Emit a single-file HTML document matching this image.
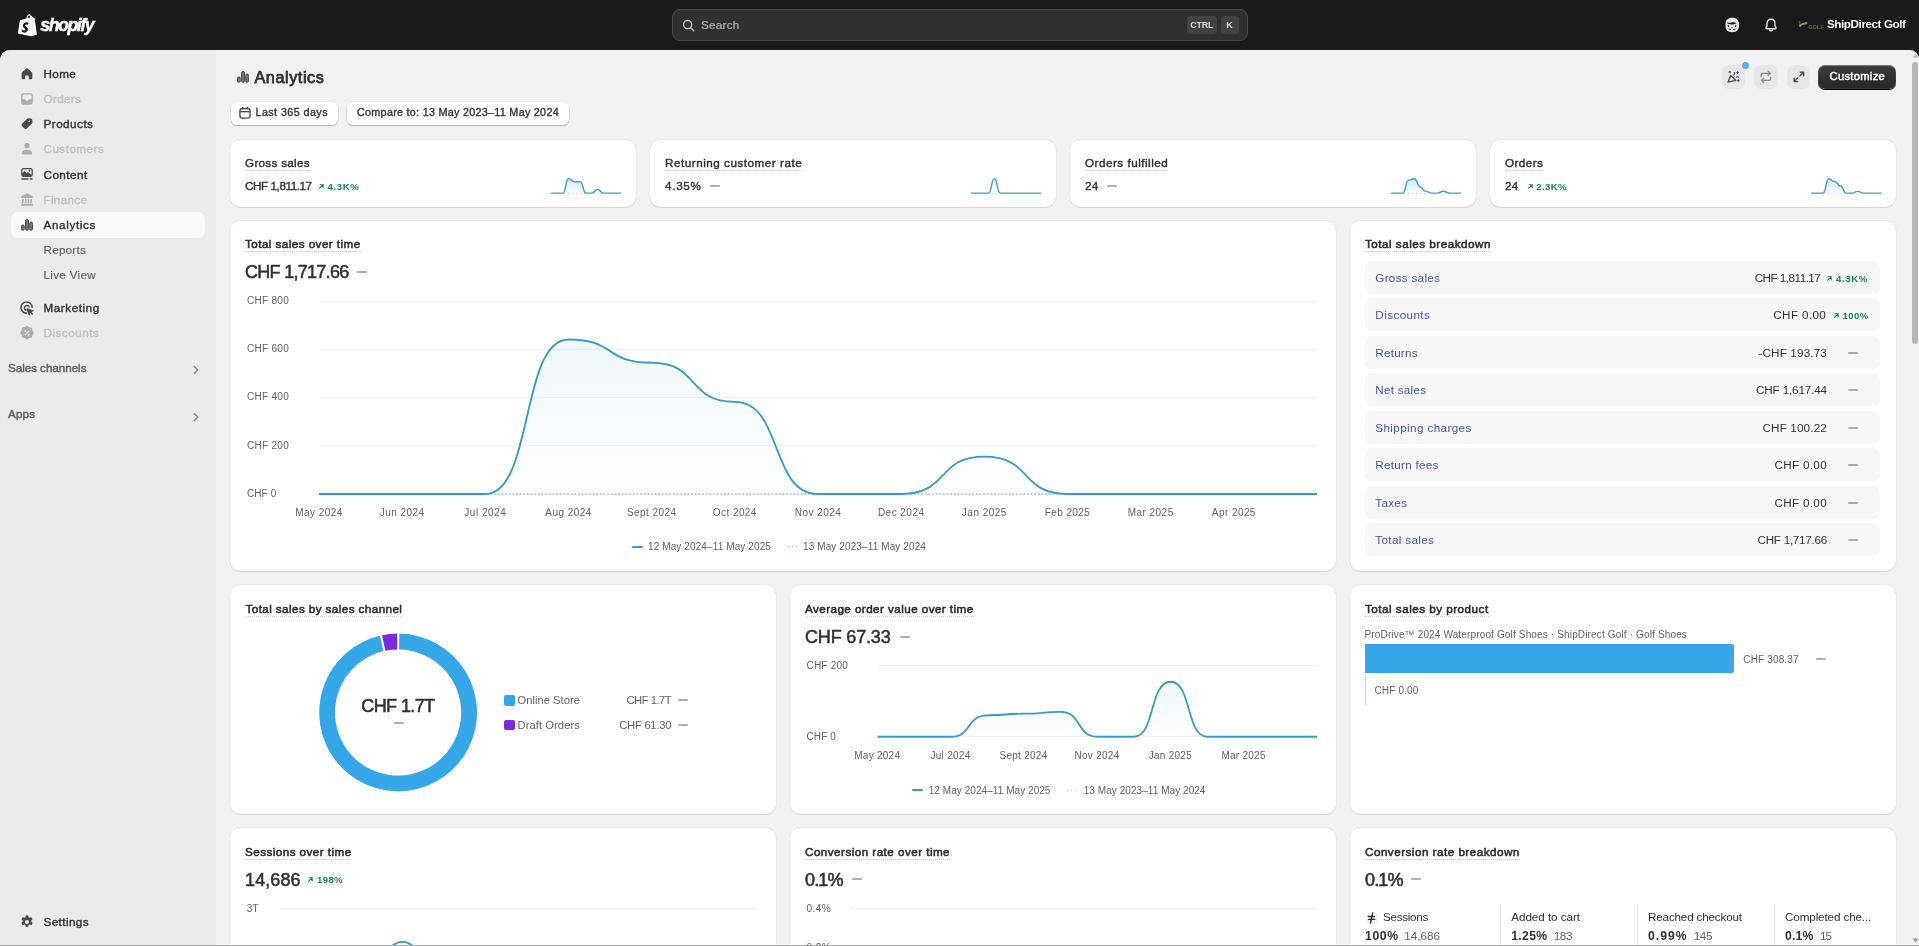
<!DOCTYPE html>
<html lang="en"><head><meta charset="utf-8"><title>Analytics</title>
<style>
html,body{margin:0;padding:0;overflow:hidden;}
body{width:1919px;height:946px;overflow:hidden;position:relative;background:#1a1a1a;font-family:"Liberation Sans",sans-serif;}
.t{position:absolute;white-space:pre;}
.b{position:absolute;display:block;overflow:visible;}
#root{position:absolute;left:0;top:0;width:1919px;height:946px;overflow:hidden;will-change:transform;}
</style></head><body><div id="root">
<div class="b" style="left:0px;top:0px;width:1919px;height:50px;background:#1a1a1a;"></div>
<svg class="b" style="left:16px;top:12px;" width="24" height="26" viewBox="0 0 24 26">
<path d="M3.9 8.2 L10.4 6.6 C10.6 4.4 11.6 2.6 13.2 2.3 C14.3 2.1 15 3 15.3 4 L16.2 4.3 L16.9 5.6 L18.6 5.9 L20.9 22.8 L14.8 24.3 L1.8 21.4 Z" fill="#fff"/>
<path d="M11.6 6.2 C11.7 4.9 12.4 3.6 13.3 3.4 C13.8 3.4 14.1 4 14.2 5.4 Z" fill="#1a1a1a"/>
<path d="M16.3 5.3 L16.9 24" stroke="#c9c9c9" stroke-width="0.5" fill="none"/>
<path d="M12.6 10.9 L12 13 C11.2 12.6 10.4 12.5 9.8 12.7 C9 13 9 13.8 9.7 14.3 C10.9 15.1 12.1 15.9 11.9 17.8 C11.7 19.8 10 20.9 8 20.6 C6.9 20.4 6 19.8 5.6 19.2 L6.3 17.4 C6.9 18 7.7 18.5 8.4 18.5 C9.2 18.5 9.5 17.7 9 17.1 C8.2 16.2 6.8 15.6 6.9 13.6 C7 11.5 8.7 10.2 10.7 10.3 C11.5 10.3 12.2 10.6 12.6 10.9 Z" fill="#1a1a1a"/>
</svg>
<div class="t" style="left:40.2px;top:13.2px;font-size:17.8px;line-height:24px;font-weight:700;font-style:italic;color:#fff;letter-spacing:-1.45px;-webkit-text-stroke:0.45px #fff;">shopify</div>
<div class="b" style="left:672px;top:9px;width:575.7px;height:32px;background:#303030;border:1px solid #4a4a4a;border-radius:8px;box-sizing:border-box;"></div>
<svg class="b" style="left:682px;top:19px;" width="13" height="13" viewBox="0 0 13 13"><circle cx="5.6" cy="5.6" r="4.1" fill="none" stroke="#c4c4c4" stroke-width="1.4"/><path d="M8.7 8.7 L11.8 11.8" stroke="#c4c4c4" stroke-width="1.4" stroke-linecap="round"/></svg>
<div class="t" style="left:701.00px;top:17.00px;font-size:11.7px;line-height:15px;color:#b5b5b5;letter-spacing:0.238px;-webkit-text-stroke:0.2px #b5b5b5;">Search</div>
<div class="b" style="left:1186.5px;top:16.3px;width:30.5px;height:17.3px;background:#424242;border-radius:4px;"></div>
<div class="t" style="left:1190.20px;top:19.00px;font-size:9px;line-height:12px;color:#d6d6d6;font-weight:700;letter-spacing:-0.249px;">CTRL</div>
<div class="b" style="left:1220.5px;top:16.3px;width:18px;height:17.3px;background:#424242;border-radius:4px;"></div>
<div class="t" style="left:1226.25px;top:19.00px;font-size:9px;line-height:12px;color:#d6d6d6;font-weight:700;">K</div>
<svg class="b" style="left:1724px;top:16px;" width="16" height="18" viewBox="0 0 16 18">
<path d="M8.200 1.700C12.600 1.700 14.900 4 14.900 8V10.500C14.900 14 12.400 16.200 8.200 16.200C4 16.200 1.500 14 1.500 10.500V8C1.500 4 3.800 1.700 8.200 1.700Z" fill="#ececec"/>
<path d="M3.300 5.900C3.700 6.800 5 7 6.600 6.700C8.700 6.300 10.700 6 12.800 7.300C11.200 7.500 10.100 8.600 8.300 8.600C6.300 8.600 5.400 7.500 3.400 7.700Z" fill="#1a1a1a"/>
<ellipse cx="4.500" cy="10.100" rx="0.800" ry="1" fill="#1a1a1a"/><ellipse cx="11.600" cy="10.100" rx="0.800" ry="1" fill="#1a1a1a"/>
<ellipse cx="8" cy="11.500" rx="0.850" ry="0.550" fill="#1a1a1a"/>
<path d="M4.300 12.800C5.300 12.500 6.300 12.700 7 13H9.100C9.800 12.700 10.900 12.500 11.900 12.800C11.300 13.700 10.200 14 9.100 14H7C5.900 14 4.900 13.700 4.300 12.800Z" fill="#1a1a1a"/>
<rect x="7" y="12.950" width="2.100" height="1.100" fill="#ececec"/>
</svg>
<svg class="b" style="left:1763.05px;top:17.3px;" width="16" height="16" viewBox="0 0 17 17">
<path d="M8.5 2.4 C5.9 2.4 4.3 4.3 4.3 6.7 L4.3 9 C4.3 9.8 3.9 10.4 3.3 11 C2.8 11.6 3.1 12.5 4 12.5 L13 12.5 C13.9 12.5 14.2 11.6 13.7 11 C13.1 10.4 12.7 9.8 12.7 9 L12.7 6.7 C12.7 4.3 11.1 2.4 8.5 2.4 Z" fill="none" stroke="#e3e3e3" stroke-width="1.45" stroke-linejoin="round"/>
<path d="M6.8 13.6 C7.1 14.4 7.7 14.8 8.5 14.8 C9.3 14.8 9.9 14.4 10.2 13.6" fill="none" stroke="#e3e3e3" stroke-width="1.3" stroke-linecap="round"/>
</svg>
<svg class="b" style="left:1798px;top:19px;" width="26" height="12" viewBox="0 0 26 12">
<path d="M1.500 2.300L2.100 7.600" stroke="#3f5f36" stroke-width="1.300" fill="none" stroke-linecap="round"/>
<path d="M2.200 6.700C3.600 4.300 6 5.400 8.500 3.900" stroke="#7aa366" stroke-width="1.900" fill="none" stroke-linecap="round"/>
<text x="10.300" y="9.800" font-family="Liberation Sans, sans-serif" font-size="5.700" font-weight="700" fill="#507545" letter-spacing="-0.150">GOLF</text>
</svg>
<div class="t" style="left:1827.00px;top:16.00px;font-size:11.7px;line-height:15px;color:#f7f7f7;font-weight:700;letter-spacing:-0.437px;">ShipDirect Golf</div>
<div class="b" style="left:0px;top:50px;width:1919px;height:896px;background:#f1f1f1;border-radius:10px 10px 0 0;"></div>
<div class="b" style="left:0px;top:50px;width:216px;height:896px;background:#ebebeb;border-radius:10px 0 0 0;"></div>
<div class="b" style="left:11px;top:212px;width:194px;height:25.5px;background:#fafafa;border-radius:7px;"></div>
<svg class="b" style="left:18px;top:64.7px;" width="18" height="18" viewBox="0 0 20 20"><path transform="matrix(.915 0 0 .944 .797 .79)" d="M9.3 3.3a1.1 1.1 0 0 1 1.4 0l4.9 4.1c.6.5.9 1.2.9 1.9v4.9a1.8 1.8 0 0 1-1.8 1.8h-1.9a.6.6 0 0 1-.6-.6v-2.6a1.2 1.2 0 0 0-1.2-1.2h-2a1.2 1.2 0 0 0-1.2 1.2v2.6a.6.6 0 0 1-.6.6H5.3a1.8 1.8 0 0 1-1.8-1.8V9.3c0-.7.3-1.4.9-1.9z" fill="#4a4a4a"/></svg>
<div class="t" style="left:43.50px;top:66.00px;font-size:11.7px;line-height:15px;color:#303030;letter-spacing:0.385px;-webkit-text-stroke:0.36px #303030;">Home</div>
<svg class="b" style="left:18px;top:89.8px;" width="18" height="18" viewBox="0 0 20 20"><path fill-rule="evenodd" d="M6 3.5h8A2.5 2.5 0 0 1 16.500 6v8A2.500 2.500 0 0 1 14 16.500H6A2.500 2.500 0 0 1 3.500 14V6A2.500 2.500 0 0 1 6 3.500zM5 6v4.200h2.300c.4 0 .7.250.8.600.2.800 1 1.300 1.900 1.300s1.700-.500 1.900-1.300c.1-.350.4-.600.8-.600H15V6a1 1 0 0 0-1-1H6a1 1 0 0 0-1 1z" fill="#adadad"/></svg>
<div class="t" style="left:43.50px;top:91.00px;font-size:11.7px;line-height:15px;color:#c1c1c1;letter-spacing:0.332px;-webkit-text-stroke:0.36px #c1c1c1;">Orders</div>
<svg class="b" style="left:18px;top:115px;" width="18" height="18" viewBox="0 0 20 20"><path transform="matrix(.907 0 0 .897 .32 1.19)" fill-rule="evenodd" d="M10.900 3.400a2 2 0 0 1 1.500-.600l2.900.100a2 2 0 0 1 1.900 1.900l.100 2.900a2 2 0 0 1-.600 1.500l-6.300 6.300a2 2 0 0 1-2.800 0l-3.100-3.100a2 2 0 0 1 0-2.800zM13.500 7.600a1.100 1.100 0 1 0 0-2.200 1.100 1.100 0 0 0 0 2.200z" fill="#4a4a4a"/></svg>
<div class="t" style="left:43.50px;top:116.00px;font-size:11.7px;line-height:15px;color:#303030;letter-spacing:0.478px;-webkit-text-stroke:0.36px #303030;">Products</div>
<svg class="b" style="left:18px;top:140px;" width="18" height="18" viewBox="0 0 20 20"><circle cx="10" cy="6.300" r="2.900" fill="#adadad"/><path d="M4.200 14.600c0-2.300 2.500-3.900 5.800-3.900s5.800 1.600 5.800 3.900c0 .9-.6 1.400-1.500 1.400H5.700c-.9 0-1.500-.5-1.500-1.400z" fill="#adadad"/></svg>
<div class="t" style="left:43.50px;top:141.00px;font-size:11.7px;line-height:15px;color:#c1c1c1;letter-spacing:0.465px;-webkit-text-stroke:0.36px #c1c1c1;">Customers</div>
<svg class="b" style="left:18px;top:165.4px;" width="18" height="18" viewBox="0 0 20 20"><path fill-rule="evenodd" d="M5.800 3.200h8.400a2.300 2.300 0 0 1 2.300 2.300v5.400a2.300 2.300 0 0 1-2.300 2.300H5.800a2.300 2.300 0 0 1-2.300-2.300V5.500a2.300 2.300 0 0 1 2.300-2.300zM5 9.300l2.300-2.600 2.200 2.300 1.500-1.300 4 3.300V5.800a1.100 1.100 0 0 0-1.100-1.100H6.100A1.100 1.100 0 0 0 5 5.800zM12.700 7.300a1 1 0 1 0 0-2 1 1 0 0 0 0 2z" fill="#4a4a4a"/><rect x="3.800" y="14.600" width="8" height="1.700" rx=".5" fill="#4a4a4a"/><rect x="12.800" y="14.600" width="3.400" height="1.700" rx=".5" fill="#4a4a4a"/></svg>
<div class="t" style="left:43.50px;top:167.00px;font-size:11.7px;line-height:15px;color:#303030;letter-spacing:0.467px;-webkit-text-stroke:0.36px #303030;">Content</div>
<svg class="b" style="left:18px;top:190.5px;" width="18" height="18" viewBox="0 0 20 20"><path d="M9.500 2.900a1.100 1.100 0 0 1 1 0l5.300 2.600c.4.200.7.600.7 1v.400c0 .500-.4.900-.9.900H4.400a.9.900 0 0 1-.9-.9v-.4c0-.400.3-.800.700-1z" fill="#adadad"/><rect x="4.600" y="8.700" width="1.700" height="4.800" fill="#adadad"/><rect x="7.700" y="8.700" width="1.700" height="4.800" fill="#adadad"/><rect x="10.700" y="8.700" width="1.700" height="4.800" fill="#adadad"/><rect x="13.700" y="8.700" width="1.700" height="4.800" fill="#adadad"/><rect x="3.500" y="14.300" width="13" height="2.200" rx=".6" fill="#adadad"/></svg>
<div class="t" style="left:43.50px;top:192.00px;font-size:11.7px;line-height:15px;color:#c1c1c1;letter-spacing:0.304px;-webkit-text-stroke:0.36px #c1c1c1;">Finance</div>
<svg class="b" style="left:18px;top:216px;" width="18" height="18" viewBox="0 0 20 20"><g fill="#757575" stroke="#4a4a4a" stroke-width="1.100"><rect x="3.850" y="9.950" width="3.100" height="5.900" rx="1.550"/><rect x="8.350" y="3.850" width="3.300" height="12" rx="1.650"/><rect x="13.050" y="6.650" width="3.100" height="9.200" rx="1.550"/></g></svg>
<div class="t" style="left:43.50px;top:217.00px;font-size:11.7px;line-height:15px;color:#303030;letter-spacing:0.631px;-webkit-text-stroke:0.36px #303030;">Analytics</div>
<svg class="b" style="left:18px;top:299px;" width="18" height="18" viewBox="0 0 20 20"><path d="M15.700 9.300A6.200 6.200 0 1 0 9.300 15.700" fill="none" stroke="#4a4a4a" stroke-width="1.700" stroke-linecap="round"/><path d="M12.500 8.800A2.800 2.800 0 1 0 8.800 12.500" fill="none" stroke="#4a4a4a" stroke-width="1.600" stroke-linecap="round"/><path d="M10.600 10.300l6.700 2.500c.4.150.4.700 0 .850l-2.500.9 2.100 2.100-1.100 1.100-2.100-2.100-.9 2.500c-.150.4-.7.4-.850 0l-2.500-6.700c-.2-.700.450-1.350 1.150-1.150z" fill="#4a4a4a"/></svg>
<div class="t" style="left:43.50px;top:300.00px;font-size:11.7px;line-height:15px;color:#303030;letter-spacing:0.542px;-webkit-text-stroke:0.36px #303030;">Marketing</div>
<svg class="b" style="left:18px;top:324px;" width="18" height="18" viewBox="0 0 20 20"><path fill-rule="evenodd" d="M8.600 2.700a2 2 0 0 1 2.800 0l.7.700c.2.200.5.300.8.300h1a2 2 0 0 1 2 2v1c0 .3.100.600.300.8l.7.700a2 2 0 0 1 0 2.800l-.7.700c-.2.200-.3.500-.3.800v1a2 2 0 0 1-2 2h-1c-.3 0-.600.100-.8.300l-.7.700a2 2 0 0 1-2.800 0l-.7-.7a1.100 1.100 0 0 0-.8-.3h-1a2 2 0 0 1-2-2v-1c0-.3-.100-.600-.300-.8l-.7-.7a2 2 0 0 1 0-2.800l.7-.7c.2-.2.3-.5.3-.8v-1a2 2 0 0 1 2-2h1c.3 0 .600-.100.800-.300zM7.400 11.700l4.300-4.300a.65.65 0 0 1 .9.900l-4.300 4.300a.65.65 0 0 1-.9-.9zM8.100 8.900a.95.95 0 1 0 0-1.900.95.95 0 0 0 0 1.900zM11.900 13a.95.95 0 1 0 0-1.900.95.95 0 0 0 0 1.900z" fill="#adadad"/></svg>
<div class="t" style="left:43.50px;top:325.00px;font-size:11.7px;line-height:15px;color:#c1c1c1;letter-spacing:0.487px;-webkit-text-stroke:0.36px #c1c1c1;">Discounts</div>
<svg class="b" style="left:18px;top:912.8px;" width="18" height="18" viewBox="0 0 20 20"><path fill-rule="evenodd" d="M8.400 3.500c.1-.6.600-1 1.200-1h.8c.6 0 1.100.4 1.200 1l.2 1.100c.4.150.750.350 1.100.6l1.050-.4c.55-.2 1.200 0 1.500.55l.4.700c.3.500.2 1.150-.250 1.550l-.85.750a4.600 4.600 0 0 1 0 1.300l.85.750c.450.4.550 1.050.250 1.550l-.4.700c-.3.550-.950.750-1.500.55l-1.050-.4c-.350.250-.7.450-1.100.6l-.2 1.100c-.1.600-.6 1-1.200 1h-.8c-.6 0-1.100-.4-1.200-1l-.2-1.100a4.600 4.600 0 0 1-1.100-.6l-1.050.4c-.55.200-1.200 0-1.500-.55l-.4-.7a1.250 1.250 0 0 1 .250-1.550l.85-.750a4.600 4.600 0 0 1 0-1.300l-.85-.750A1.250 1.250 0 0 1 4.150 6.050l.4-.7c.3-.55.950-.750 1.500-.55l1.050.4c.350-.250.7-.450 1.100-.6zM10 12.300a2.300 2.300 0 1 0 0-4.600 2.300 2.300 0 0 0 0 4.600z" fill="#4a4a4a"/></svg>
<div class="t" style="left:43.50px;top:914.00px;font-size:11.7px;line-height:15px;color:#303030;letter-spacing:0.403px;-webkit-text-stroke:0.36px #303030;">Settings</div>
<div class="t" style="left:43.50px;top:242.00px;font-size:11.7px;line-height:15px;color:#616161;letter-spacing:0.219px;-webkit-text-stroke:0.15px #616161;">Reports</div>
<div class="t" style="left:43.50px;top:267.00px;font-size:11.7px;line-height:15px;color:#616161;letter-spacing:0.293px;-webkit-text-stroke:0.15px #616161;">Live View</div>
<div class="t" style="left:8.00px;top:360.00px;font-size:11.7px;line-height:15px;color:#616161;letter-spacing:-0.061px;-webkit-text-stroke:0.44px #616161;">Sales channels</div>
<div class="t" style="left:8.00px;top:406.00px;font-size:11.7px;line-height:15px;color:#616161;letter-spacing:0.145px;-webkit-text-stroke:0.44px #616161;">Apps</div>
<svg class="b" style="left:190px;top:364.3px;" width="12" height="12" viewBox="0 0 12 12"><path d="M4.300 2.500L7.900 6 4.300 9.500" fill="none" stroke="#8a8a8a" stroke-width="1.400" stroke-linecap="round" stroke-linejoin="round"/></svg>
<svg class="b" style="left:190px;top:410.8px;" width="12" height="12" viewBox="0 0 12 12"><path d="M4.300 2.500L7.900 6 4.300 9.500" fill="none" stroke="#8a8a8a" stroke-width="1.400" stroke-linecap="round" stroke-linejoin="round"/></svg>
<svg class="b" style="left:233.8px;top:67.7px;" width="18" height="18" viewBox="0 0 20 20"><g fill="#757575" stroke="#4a4a4a" stroke-width="1.100"><rect x="3.850" y="9.950" width="3.100" height="5.900" rx="1.550"/><rect x="8.350" y="3.850" width="3.300" height="12" rx="1.650"/><rect x="13.050" y="6.650" width="3.100" height="9.200" rx="1.550"/></g></svg>
<div class="t" style="left:254.50px;top:67.00px;font-size:16.2px;line-height:20px;color:#303030;letter-spacing:0.575px;-webkit-text-stroke:0.75px #303030;">Analytics</div>
<div class="b" style="left:1721.7px;top:65px;width:23.5px;height:23.7px;background:#e7e7e7;border-radius:7px;"></div>
<div class="b" style="left:1754.3px;top:65px;width:23.5px;height:23.7px;background:#e7e7e7;border-radius:7px;"></div>
<div class="b" style="left:1786.8px;top:65px;width:23.5px;height:23.7px;background:#e7e7e7;border-radius:7px;"></div>
<div class="b" style="left:1741.8px;top:62px;width:7.2px;height:7.2px;background:#52b1f0;border-radius:50%;"></div>
<svg class="b" style="left:1725.4px;top:69.1px;" width="15.8" height="15.8" viewBox="0 0 17 17"><path d="M3.300 14.200L6 6.900L11.600 12.200Z" fill="none" stroke="#4a4a4a" stroke-width="1.450" stroke-linejoin="round"/>
<path d="M9.600 6.300c.8-.6 1-1.700.5-2.600M12.200 8.700c.8-.5 1.900-.4 2.500.2" fill="none" stroke="#4a4a4a" stroke-width="1.200" stroke-linecap="round"/>
<path d="M5.200 2.300v1.800M4.300 3.200h1.800M13.600 2.800v2M12.600 3.800h2M14.300 11.600v1.800M13.400 12.500h1.800" stroke="#4a4a4a" stroke-width="1.100" stroke-linecap="round"/></svg>
<svg class="b" style="left:1758.1px;top:69px;" width="15.8" height="15.8" viewBox="0 0 17 17"><path d="M3.300 8V6.800a2 2 0 0 1 2-2h7.400M10.900 2.500l2.300 2.300-2.300 2.300" fill="none" stroke="#8a8a8a" stroke-width="1.400" stroke-linecap="round" stroke-linejoin="round"/>
<path d="M13.700 9v1.200a2 2 0 0 1-2 2H4.300M6.100 14.500l-2.300-2.300 2.300-2.300" fill="none" stroke="#8a8a8a" stroke-width="1.400" stroke-linecap="round" stroke-linejoin="round"/></svg>
<svg class="b" style="left:1790.6px;top:69px;" width="15.8" height="15.8" viewBox="0 0 17 17"><path d="M9.800 3.400h3.800v3.800M13.300 3.700L9.500 7.500M7.200 13.600H3.400V9.800M3.700 13.300l3.800-3.800" fill="none" stroke="#4a4a4a" stroke-width="1.450" stroke-linecap="round" stroke-linejoin="round"/></svg>
<div class="b" style="left:1818.3px;top:64.5px;width:77.5px;height:24.8px;background:linear-gradient(#3d3d3d,#262626);border-radius:7px;box-shadow:inset 0 1px 0 rgba(255,255,255,.25),0 1px 0 #000, inset 0 0 0 1px rgba(255,255,255,.08);"></div>
<div class="t" style="left:1829.60px;top:69.00px;font-size:11.2px;line-height:14px;color:#fff;letter-spacing:0.288px;-webkit-text-stroke:0.43px #fff;">Customize</div>
<div class="b" style="left:230.5px;top:102px;width:107.5px;height:22.8px;background:#fff;border-radius:6px;box-shadow:0 0 0 0.5px rgba(0,0,0,.07),0 1px 0 0.3px rgba(0,0,0,.17);"></div>
<svg class="b" style="left:238px;top:105.8px;" width="14" height="14" viewBox="0 0 14 14"><rect x="1.900" y="2.500" width="10.200" height="9.600" rx="2.300" fill="none" stroke="#4a4a4a" stroke-width="1.350"/><path d="M2.200 5.700h9.600" stroke="#4a4a4a" stroke-width="1.350"/><path d="M4.700 1.300v1.600M9.300 1.300v1.600" stroke="#4a4a4a" stroke-width="1.350" stroke-linecap="round"/></svg>
<div class="t" style="left:255.50px;top:105.00px;font-size:10.8px;line-height:14px;color:#303030;letter-spacing:0.404px;-webkit-text-stroke:0.33px #303030;">Last 365 days</div>
<div class="b" style="left:346.8px;top:102px;width:222.7px;height:22.8px;background:#fff;border-radius:6px;box-shadow:0 0 0 0.5px rgba(0,0,0,.07),0 1px 0 0.3px rgba(0,0,0,.17);"></div>
<div class="t" style="left:357.00px;top:105.00px;font-size:10.8px;line-height:14px;color:#303030;letter-spacing:0.271px;-webkit-text-stroke:0.33px #303030;">Compare to: 13 May 2023–11 May 2024</div>
<div class="b" style="left:230px;top:140px;width:406px;height:67px;background:#fff;border-radius:10.5px;box-shadow:0 0 0 0.5px rgba(0,0,0,.065),0 1px 0 0 rgba(0,0,0,.085);"></div>
<div class="b" style="left:650px;top:140px;width:406px;height:67px;background:#fff;border-radius:10.5px;box-shadow:0 0 0 0.5px rgba(0,0,0,.065),0 1px 0 0 rgba(0,0,0,.085);"></div>
<div class="b" style="left:1070px;top:140px;width:406px;height:67px;background:#fff;border-radius:10.5px;box-shadow:0 0 0 0.5px rgba(0,0,0,.065),0 1px 0 0 rgba(0,0,0,.085);"></div>
<div class="b" style="left:1490px;top:140px;width:406px;height:67px;background:#fff;border-radius:10.5px;box-shadow:0 0 0 0.5px rgba(0,0,0,.065),0 1px 0 0 rgba(0,0,0,.085);"></div>
<div class="t" style="left:245.00px;top:155.00px;font-size:11.7px;line-height:15px;color:#2a2a2a;letter-spacing:0.294px;-webkit-text-stroke:0.36px #2a2a2a;">Gross sales</div>
<div class="b" style="left:245px;top:169.9px;width:65px;height:0px;border-top:1px dotted #cccccc;"></div>
<div class="t" style="left:245.00px;top:178.00px;font-size:11.7px;line-height:15px;color:#303030;letter-spacing:-0.435px;-webkit-text-stroke:0.36px #303030;">CHF 1,811.17</div>
<svg class="b" style="left:318.7px;top:184.0px;" width="4.9" height="4.9" viewBox="0 0 6 6"><path d="M0.900 5.100L4.900 1.100M1.600 0.900H5.100V4.400" fill="none" stroke="#12855a" stroke-width="1.450" stroke-linecap="square" stroke-linejoin="miter"/></svg>
<div class="t" style="left:327.50px;top:180.00px;font-size:9.6px;line-height:13px;color:#12855a;font-weight:700;letter-spacing:0.637px;">4.3K%</div>
<svg class="b" style="left:0;top:0" width="1919" height="946"><path d="M551.20 193.10C554.39 193.10 553.81 193.10 557.00 193.10C560.19 193.10 559.61 193.10 562.80 193.10C565.99 193.10 565.41 178.70 568.60 178.70C571.79 178.70 571.21 181.72 574.40 181.72C577.59 181.72 577.01 181.87 580.20 181.87C583.39 181.87 582.81 193.10 586.00 193.10C589.19 193.10 588.61 193.10 591.80 193.10C594.99 193.10 594.41 189.36 597.60 189.36C600.79 189.36 600.21 193.10 603.40 193.10C606.59 193.10 606.01 193.10 609.20 193.10C612.39 193.10 611.81 193.10 615.00 193.10C618.19 193.10 617.61 193.10 620.80 193.10L620.80 193.1L551.20 193.1Z" fill="url(#sg)" /><path d="M564.2 193.4H585.2" stroke="#9cc9e4" stroke-width="1" stroke-dasharray="1 3"/><path d="M551.20 193.10C554.39 193.10 553.81 193.10 557.00 193.10C560.19 193.10 559.61 193.10 562.80 193.10C565.99 193.10 565.41 178.70 568.60 178.70C571.79 178.70 571.21 181.72 574.40 181.72C577.59 181.72 577.01 181.87 580.20 181.87C583.39 181.87 582.81 193.10 586.00 193.10C589.19 193.10 588.61 193.10 591.80 193.10C594.99 193.10 594.41 189.36 597.60 189.36C600.79 189.36 600.21 193.10 603.40 193.10C606.59 193.10 606.01 193.10 609.20 193.10C612.39 193.10 611.81 193.10 615.00 193.10C618.19 193.10 617.61 193.10 620.80 193.10" fill="none" stroke="#469ccb" stroke-width="1.450" stroke-linecap="round"/></svg>
<div class="t" style="left:665.00px;top:155.00px;font-size:11.7px;line-height:15px;color:#2a2a2a;letter-spacing:0.513px;-webkit-text-stroke:0.36px #2a2a2a;">Returning customer rate</div>
<div class="b" style="left:665px;top:169.9px;width:137.3px;height:0px;border-top:1px dotted #cccccc;"></div>
<div class="t" style="left:665.00px;top:178.00px;font-size:11.7px;line-height:15px;color:#303030;letter-spacing:0.705px;-webkit-text-stroke:0.36px #303030;">4.35%</div>
<div class="b" style="left:709.5px;top:185px;width:10.7px;height:2px;background:#adadad;border-radius:1px;"></div>
<svg class="b" style="left:0;top:0" width="1919" height="946"><path d="M984.2 193.4H1005.2" stroke="#9cc9e4" stroke-width="1" stroke-dasharray="1 3"/><path d="M971.20 193.10C974.39 193.10 973.81 193.10 977.00 193.10C980.19 193.10 979.61 193.10 982.80 193.10C985.99 193.10 985.41 193.10 988.60 193.10C991.79 193.10 991.21 178.70 994.40 178.70C997.59 178.70 997.01 193.10 1000.20 193.10C1003.39 193.10 1002.81 193.10 1006.00 193.10C1009.19 193.10 1008.61 193.10 1011.80 193.10C1014.99 193.10 1014.41 193.10 1017.60 193.10C1020.79 193.10 1020.21 193.10 1023.40 193.10C1026.59 193.10 1026.01 193.10 1029.20 193.10C1032.39 193.10 1031.81 193.10 1035.00 193.10C1038.19 193.10 1037.61 193.10 1040.80 193.10" fill="none" stroke="#469ccb" stroke-width="1.450" stroke-linecap="round"/></svg>
<div class="t" style="left:1085.00px;top:155.00px;font-size:11.7px;line-height:15px;color:#2a2a2a;letter-spacing:0.492px;-webkit-text-stroke:0.36px #2a2a2a;">Orders fulfilled</div>
<div class="b" style="left:1085px;top:169.9px;width:83.3px;height:0px;border-top:1px dotted #cccccc;"></div>
<div class="t" style="left:1085.00px;top:178.00px;font-size:11.7px;line-height:15px;color:#303030;letter-spacing:0.343px;-webkit-text-stroke:0.36px #303030;">24</div>
<div class="b" style="left:1106.5px;top:185px;width:10.7px;height:2px;background:#adadad;border-radius:1px;"></div>
<svg class="b" style="left:0;top:0" width="1919" height="946"><path d="M1391.20 193.10C1394.39 193.10 1393.81 193.10 1397.00 193.10C1400.19 193.10 1399.61 193.10 1402.80 193.10C1405.99 193.10 1405.41 180.14 1408.60 180.14C1411.79 180.14 1411.21 178.70 1414.40 178.70C1417.59 178.70 1417.01 186.91 1420.20 186.91C1423.39 186.91 1422.81 191.37 1426.00 191.37C1429.19 191.37 1428.61 193.10 1431.80 193.10C1434.99 193.10 1434.41 193.10 1437.60 193.10C1440.79 193.10 1440.21 191.23 1443.40 191.23C1446.59 191.23 1446.01 193.10 1449.20 193.10C1452.39 193.10 1451.81 193.10 1455.00 193.10C1458.19 193.10 1457.61 193.10 1460.80 193.10L1460.80 193.1L1391.20 193.1Z" fill="url(#sg)" /><path d="M1404.2 193.4H1425.2" stroke="#9cc9e4" stroke-width="1" stroke-dasharray="1 3"/><path d="M1391.20 193.10C1394.39 193.10 1393.81 193.10 1397.00 193.10C1400.19 193.10 1399.61 193.10 1402.80 193.10C1405.99 193.10 1405.41 180.14 1408.60 180.14C1411.79 180.14 1411.21 178.70 1414.40 178.70C1417.59 178.70 1417.01 186.91 1420.20 186.91C1423.39 186.91 1422.81 191.37 1426.00 191.37C1429.19 191.37 1428.61 193.10 1431.80 193.10C1434.99 193.10 1434.41 193.10 1437.60 193.10C1440.79 193.10 1440.21 191.23 1443.40 191.23C1446.59 191.23 1446.01 193.10 1449.20 193.10C1452.39 193.10 1451.81 193.10 1455.00 193.10C1458.19 193.10 1457.61 193.10 1460.80 193.10" fill="none" stroke="#469ccb" stroke-width="1.450" stroke-linecap="round"/></svg>
<div class="t" style="left:1505.00px;top:155.00px;font-size:11.7px;line-height:15px;color:#2a2a2a;letter-spacing:0.424px;-webkit-text-stroke:0.36px #2a2a2a;">Orders</div>
<div class="b" style="left:1505px;top:169.9px;width:38.3px;height:0px;border-top:1px dotted #cccccc;"></div>
<div class="t" style="left:1505.00px;top:178.00px;font-size:11.7px;line-height:15px;color:#303030;letter-spacing:0.343px;-webkit-text-stroke:0.36px #303030;">24</div>
<svg class="b" style="left:1527.5px;top:184.0px;" width="4.9" height="4.9" viewBox="0 0 6 6"><path d="M0.900 5.100L4.900 1.100M1.600 0.900H5.100V4.400" fill="none" stroke="#12855a" stroke-width="1.450" stroke-linecap="square" stroke-linejoin="miter"/></svg>
<div class="t" style="left:1536.30px;top:180.00px;font-size:9.6px;line-height:13px;color:#12855a;font-weight:700;letter-spacing:0.387px;">2.3K%</div>
<svg class="b" style="left:0;top:0" width="1919" height="946"><path d="M1811.40 193.10C1814.59 193.10 1814.01 193.10 1817.20 193.10C1820.39 193.10 1819.81 193.10 1823.00 193.10C1826.19 193.10 1825.61 178.70 1828.80 178.70C1831.99 178.70 1831.41 181.58 1834.60 181.58C1837.79 181.58 1837.21 185.90 1840.40 185.90C1843.59 185.90 1843.01 193.10 1846.20 193.10C1849.39 193.10 1848.81 193.10 1852.00 193.10C1855.19 193.10 1854.61 191.37 1857.80 191.37C1860.99 191.37 1860.41 193.10 1863.60 193.10C1866.79 193.10 1866.21 193.10 1869.40 193.10C1872.59 193.10 1872.01 193.10 1875.20 193.10C1878.39 193.10 1877.81 193.10 1881.00 193.10L1881.00 193.1L1811.40 193.1Z" fill="url(#sg)" /><path d="M1824.4 193.4H1845.4" stroke="#9cc9e4" stroke-width="1" stroke-dasharray="1 3"/><path d="M1811.40 193.10C1814.59 193.10 1814.01 193.10 1817.20 193.10C1820.39 193.10 1819.81 193.10 1823.00 193.10C1826.19 193.10 1825.61 178.70 1828.80 178.70C1831.99 178.70 1831.41 181.58 1834.60 181.58C1837.79 181.58 1837.21 185.90 1840.40 185.90C1843.59 185.90 1843.01 193.10 1846.20 193.10C1849.39 193.10 1848.81 193.10 1852.00 193.10C1855.19 193.10 1854.61 191.37 1857.80 191.37C1860.99 191.37 1860.41 193.10 1863.60 193.10C1866.79 193.10 1866.21 193.10 1869.40 193.10C1872.59 193.10 1872.01 193.10 1875.20 193.10C1878.39 193.10 1877.81 193.10 1881.00 193.10" fill="none" stroke="#469ccb" stroke-width="1.450" stroke-linecap="round"/></svg>
<div class="b" style="left:230px;top:221px;width:1106px;height:350px;background:#fff;border-radius:10.5px;box-shadow:0 0 0 0.5px rgba(0,0,0,.065),0 1px 0 0 rgba(0,0,0,.085);"></div>
<div class="t" style="left:245.00px;top:236.00px;font-size:11.7px;line-height:15px;color:#2a2a2a;letter-spacing:0.434px;-webkit-text-stroke:0.52px #2a2a2a;">Total sales over time</div>
<div class="b" style="left:245px;top:250.9px;width:115.75px;height:0px;border-top:1px dotted #cccccc;"></div>
<div class="t" style="left:245.00px;top:261.00px;font-size:18px;line-height:22px;color:#303030;letter-spacing:-0.714px;-webkit-text-stroke:0.52px #303030;">CHF 1,717.66</div>
<div class="b" style="left:355.5px;top:271px;width:11px;height:2px;background:#adadad;border-radius:1px;"></div>
<div class="b" style="left:320px;top:493.5px;width:996px;height:1px;background:#f1f1f1;"></div>
<div class="t" style="left:247.00px;top:487.00px;font-size:10px;line-height:13px;color:#616161;letter-spacing:0.082px;">CHF 0</div>
<div class="b" style="left:320px;top:445.25px;width:996px;height:1px;background:#f1f1f1;"></div>
<div class="t" style="left:247.00px;top:439.00px;font-size:10px;line-height:13px;color:#616161;letter-spacing:0.283px;">CHF 200</div>
<div class="b" style="left:320px;top:397.0px;width:996px;height:1px;background:#f1f1f1;"></div>
<div class="t" style="left:247.00px;top:390.00px;font-size:10px;line-height:13px;color:#616161;letter-spacing:0.283px;">CHF 400</div>
<div class="b" style="left:320px;top:348.75px;width:996px;height:1px;background:#f1f1f1;"></div>
<div class="t" style="left:247.00px;top:342.00px;font-size:10px;line-height:13px;color:#616161;letter-spacing:0.283px;">CHF 600</div>
<div class="b" style="left:320px;top:300.5px;width:996px;height:1px;background:#f1f1f1;"></div>
<div class="t" style="left:247.00px;top:294.00px;font-size:10px;line-height:13px;color:#616161;letter-spacing:0.283px;">CHF 800</div>
<svg class="b" style="left:0;top:0" width="1919" height="946">
<defs><linearGradient id="ag" x1="0" y1="0" x2="0" y2="1"><stop offset="0" stop-color="#3a9fd4" stop-opacity=".085"/><stop offset="1" stop-color="#3a9fd4" stop-opacity="0"/></linearGradient>
<linearGradient id="sg" x1="0" y1="0" x2="0" y2="1"><stop offset="0" stop-color="#5ab4e8" stop-opacity=".30"/><stop offset="1" stop-color="#5ab4e8" stop-opacity=".02"/></linearGradient></defs>
<path d="M319.00 494.00C367.24 494.00 353.93 494.00 402.17 494.00C450.41 494.00 437.10 494.00 485.34 494.00C533.58 494.00 520.27 339.50 568.51 339.50C616.75 339.50 603.44 362.76 651.68 362.76C699.92 362.76 686.61 401.84 734.85 401.84C783.09 401.84 769.78 494.00 818.02 494.00C866.26 494.00 852.95 494.00 901.19 494.00C949.43 494.00 936.12 456.61 984.36 456.61C1032.60 456.61 1019.29 494.00 1067.53 494.00C1115.77 494.00 1102.46 494.00 1150.70 494.00C1198.94 494.00 1185.63 494.00 1233.87 494.00C1282.11 494.00 1268.80 494.00 1317.04 494.00L1317.04 494L319.00 494Z" fill="url(#ag)"/>
<path d="M319 494H1316" stroke="#8cc2e0" stroke-width="1.500" stroke-dasharray="1.500 2.150" fill="none"/>
<path d="M319.00 494.00C367.24 494.00 353.93 494.00 402.17 494.00C450.41 494.00 437.10 494.00 485.34 494.00C533.58 494.00 520.27 339.50 568.51 339.50C616.75 339.50 603.44 362.76 651.68 362.76C699.92 362.76 686.61 401.84 734.85 401.84C783.09 401.84 769.78 494.00 818.02 494.00C866.26 494.00 852.95 494.00 901.19 494.00C949.43 494.00 936.12 456.61 984.36 456.61C1032.60 456.61 1019.29 494.00 1067.53 494.00C1115.77 494.00 1102.46 494.00 1150.70 494.00C1198.94 494.00 1185.63 494.00 1233.87 494.00C1282.11 494.00 1268.80 494.00 1317.04 494.00" fill="none" stroke="#3c98ca" stroke-width="1.850" stroke-linecap="butt" stroke-linejoin="round"/>
</svg>
<div class="t" style="left:295.25px;top:506.00px;font-size:10px;line-height:13px;color:#616161;letter-spacing:0.448px;">May 2024</div>
<div class="t" style="left:379.67px;top:506.00px;font-size:10px;line-height:13px;color:#616161;letter-spacing:0.481px;">Jun 2024</div>
<div class="t" style="left:464.34px;top:506.00px;font-size:10px;line-height:13px;color:#616161;letter-spacing:0.524px;">Jul 2024</div>
<div class="t" style="left:545.26px;top:506.00px;font-size:10px;line-height:13px;color:#616161;letter-spacing:0.460px;">Aug 2024</div>
<div class="t" style="left:626.93px;top:506.00px;font-size:10px;line-height:13px;color:#616161;letter-spacing:0.434px;">Sept 2024</div>
<div class="t" style="left:712.85px;top:506.00px;font-size:10px;line-height:13px;color:#616161;letter-spacing:0.427px;">Oct 2024</div>
<div class="t" style="left:794.77px;top:506.00px;font-size:10px;line-height:13px;color:#616161;letter-spacing:0.461px;">Nov 2024</div>
<div class="t" style="left:877.94px;top:506.00px;font-size:10px;line-height:13px;color:#616161;letter-spacing:0.461px;">Dec 2024</div>
<div class="t" style="left:961.86px;top:506.00px;font-size:10px;line-height:13px;color:#616161;letter-spacing:0.481px;">Jan 2025</div>
<div class="t" style="left:1044.78px;top:506.00px;font-size:10px;line-height:13px;color:#616161;letter-spacing:0.405px;">Feb 2025</div>
<div class="t" style="left:1127.70px;top:506.00px;font-size:10px;line-height:13px;color:#616161;letter-spacing:0.469px;">Mar 2025</div>
<div class="t" style="left:1211.87px;top:506.00px;font-size:10px;line-height:13px;color:#616161;letter-spacing:0.427px;">Apr 2025</div>
<div class="b" style="left:632px;top:545.5px;width:11px;height:2px;background:#3c98ca;border-radius:1px;"></div>
<div class="t" style="left:648.00px;top:540.00px;font-size:10px;line-height:13px;color:#616161;letter-spacing:0.111px;">12 May 2024–11 May 2025</div>
<svg class="b" style="left:787px;top:544px;" width="12" height="5" viewBox="0 0 12 5"><circle cx="1.500" cy="2.500" r="1" fill="#a9d3ea"/><circle cx="5.500" cy="2.500" r="1" fill="#a9d3ea"/><circle cx="9.500" cy="2.500" r="1" fill="#a9d3ea"/></svg>
<div class="t" style="left:803.00px;top:540.00px;font-size:10px;line-height:13px;color:#616161;letter-spacing:0.111px;">13 May 2023–11 May 2024</div>
<div class="b" style="left:1350px;top:221px;width:546px;height:350px;background:#fff;border-radius:10.5px;box-shadow:0 0 0 0.5px rgba(0,0,0,.065),0 1px 0 0 rgba(0,0,0,.085);"></div>
<div class="t" style="left:1365.00px;top:236.00px;font-size:11.7px;line-height:15px;color:#2a2a2a;letter-spacing:0.487px;-webkit-text-stroke:0.52px #2a2a2a;">Total sales breakdown</div>
<div class="b" style="left:1365px;top:250.9px;width:126px;height:0px;border-top:1px dotted #cccccc;"></div>
<div class="b" style="left:1365px;top:261.0px;width:515px;height:33px;background:#f7f7f7;border-radius:7px;"></div>
<div class="t" style="left:1375.30px;top:270.00px;font-size:11.7px;line-height:15px;color:#3f55a3;letter-spacing:0.294px;">Gross sales</div>
<div class="t" style="left:1754.70px;top:270.00px;font-size:11.7px;line-height:15px;color:#303030;letter-spacing:-0.523px;">CHF 1,811.17</div>
<svg class="b" style="left:1827.2px;top:276.25px;" width="4.9" height="4.9" viewBox="0 0 6 6"><path d="M0.900 5.100L4.900 1.100M1.600 0.900H5.100V4.400" fill="none" stroke="#12855a" stroke-width="1.450" stroke-linecap="square" stroke-linejoin="miter"/></svg>
<div class="t" style="left:1836.00px;top:272.00px;font-size:9.6px;line-height:13px;color:#12855a;font-weight:700;letter-spacing:0.637px;">4.3K%</div>
<div class="b" style="left:1365px;top:298.45px;width:515px;height:33px;background:#f7f7f7;border-radius:7px;"></div>
<div class="t" style="left:1375.30px;top:307.00px;font-size:11.7px;line-height:15px;color:#3f55a3;letter-spacing:0.403px;">Discounts</div>
<div class="t" style="left:1773.30px;top:307.00px;font-size:11.7px;line-height:15px;color:#303030;letter-spacing:0.366px;">CHF 0.00</div>
<svg class="b" style="left:1833.7px;top:313.25px;" width="4.9" height="4.9" viewBox="0 0 6 6"><path d="M0.900 5.100L4.900 1.100M1.600 0.900H5.100V4.400" fill="none" stroke="#12855a" stroke-width="1.450" stroke-linecap="square" stroke-linejoin="miter"/></svg>
<div class="t" style="left:1842.50px;top:309.00px;font-size:9.6px;line-height:13px;color:#12855a;font-weight:700;letter-spacing:0.437px;">100%</div>
<div class="b" style="left:1365px;top:335.9px;width:515px;height:33px;background:#f7f7f7;border-radius:7px;"></div>
<div class="t" style="left:1375.30px;top:345.00px;font-size:11.7px;line-height:15px;color:#3f55a3;letter-spacing:0.219px;">Returns</div>
<div class="t" style="left:1758.50px;top:345.00px;font-size:11.7px;line-height:15px;color:#303030;letter-spacing:0.138px;">-CHF 193.73</div>
<div class="b" style="left:1847.5px;top:352px;width:10.5px;height:2px;background:#adadad;border-radius:1px;"></div>
<div class="b" style="left:1365px;top:373.35px;width:515px;height:33px;background:#f7f7f7;border-radius:7px;"></div>
<div class="t" style="left:1375.30px;top:382.00px;font-size:11.7px;line-height:15px;color:#3f55a3;letter-spacing:0.248px;">Net sales</div>
<div class="t" style="left:1756.00px;top:382.00px;font-size:11.7px;line-height:15px;color:#303030;letter-spacing:-0.153px;">CHF 1,617.44</div>
<div class="b" style="left:1847.5px;top:389px;width:10.5px;height:2px;background:#adadad;border-radius:1px;"></div>
<div class="b" style="left:1365px;top:410.8px;width:515px;height:33px;background:#f7f7f7;border-radius:7px;"></div>
<div class="t" style="left:1375.30px;top:420.00px;font-size:11.7px;line-height:15px;color:#3f55a3;letter-spacing:0.380px;">Shipping charges</div>
<div class="t" style="left:1762.50px;top:420.00px;font-size:11.7px;line-height:15px;color:#303030;letter-spacing:0.142px;">CHF 100.22</div>
<div class="b" style="left:1847.5px;top:427px;width:10.5px;height:2px;background:#adadad;border-radius:1px;"></div>
<div class="b" style="left:1365px;top:448.25px;width:515px;height:33px;background:#f7f7f7;border-radius:7px;"></div>
<div class="t" style="left:1375.30px;top:457.00px;font-size:11.7px;line-height:15px;color:#3f55a3;letter-spacing:0.274px;">Return fees</div>
<div class="t" style="left:1774.50px;top:457.00px;font-size:11.7px;line-height:15px;color:#303030;letter-spacing:0.304px;">CHF 0.00</div>
<div class="b" style="left:1847.5px;top:464px;width:10.5px;height:2px;background:#adadad;border-radius:1px;"></div>
<div class="b" style="left:1365px;top:485.70000000000005px;width:515px;height:33px;background:#f7f7f7;border-radius:7px;"></div>
<div class="t" style="left:1375.30px;top:495.00px;font-size:11.7px;line-height:15px;color:#3f55a3;letter-spacing:0.287px;">Taxes</div>
<div class="t" style="left:1774.50px;top:495.00px;font-size:11.7px;line-height:15px;color:#303030;letter-spacing:0.304px;">CHF 0.00</div>
<div class="b" style="left:1847.5px;top:502px;width:10.5px;height:2px;background:#adadad;border-radius:1px;"></div>
<div class="b" style="left:1365px;top:523.1500000000001px;width:515px;height:33px;background:#f7f7f7;border-radius:7px;"></div>
<div class="t" style="left:1375.30px;top:532.00px;font-size:11.7px;line-height:15px;color:#3f55a3;letter-spacing:0.338px;">Total sales</div>
<div class="t" style="left:1757.50px;top:532.00px;font-size:11.7px;line-height:15px;color:#303030;letter-spacing:-0.278px;">CHF 1,717.66</div>
<div class="b" style="left:1847.5px;top:539px;width:10.5px;height:2px;background:#adadad;border-radius:1px;"></div>
<div class="b" style="left:230px;top:585px;width:546px;height:229px;background:#fff;border-radius:10.5px;box-shadow:0 0 0 0.5px rgba(0,0,0,.065),0 1px 0 0 rgba(0,0,0,.085);"></div>
<div class="b" style="left:790px;top:585px;width:546px;height:229px;background:#fff;border-radius:10.5px;box-shadow:0 0 0 0.5px rgba(0,0,0,.065),0 1px 0 0 rgba(0,0,0,.085);"></div>
<div class="b" style="left:1350px;top:585px;width:546px;height:229px;background:#fff;border-radius:10.5px;box-shadow:0 0 0 0.5px rgba(0,0,0,.065),0 1px 0 0 rgba(0,0,0,.085);"></div>
<div class="t" style="left:245.50px;top:601.00px;font-size:11.7px;line-height:15px;color:#2a2a2a;letter-spacing:0.404px;-webkit-text-stroke:0.52px #2a2a2a;">Total sales by sales channel</div>
<div class="b" style="left:245.5px;top:615.6px;width:157px;height:0px;border-top:1px dotted #cccccc;"></div>
<svg class="b" style="left:0;top:0" width="1919" height="946"><path d="M399.34 633.61A78.9 78.9 0 1 1 379.82 635.75L383.48 651.12A63.1 63.1 0 1 0 399.09 649.41Z" fill="#35a7e8"/><path d="M382.10 635.24A78.9 78.9 0 0 1 397.14 633.61L397.33 649.40A63.1 63.1 0 0 0 385.30 650.71Z" fill="#7c2ae0"/></svg>
<div class="t" style="left:361.27px;top:695.00px;font-size:18px;line-height:22px;color:#303030;letter-spacing:-0.595px;-webkit-text-stroke:0.52px #303030;">CHF 1.7T</div>
<div class="b" style="left:393.5px;top:722px;width:10px;height:2px;background:#adadad;border-radius:1px;"></div>
<div class="b" style="left:504px;top:695.0px;width:10.5px;height:10.5px;background:#35a7e8;border-radius:2px;"></div>
<div class="t" style="left:517.50px;top:693.00px;font-size:11.2px;line-height:14px;color:#616161;letter-spacing:0.020px;">Online Store</div>
<div class="t" style="left:626.50px;top:693.00px;font-size:11.2px;line-height:14px;color:#616161;letter-spacing:-0.474px;">CHF 1.7T</div>
<div class="b" style="left:677.5px;top:699px;width:10px;height:2px;background:#adadad;border-radius:1px;"></div>
<div class="b" style="left:504px;top:719.75px;width:10.5px;height:10.5px;background:#7c2ae0;border-radius:2px;"></div>
<div class="t" style="left:517.50px;top:718.00px;font-size:11.2px;line-height:14px;color:#616161;letter-spacing:0.074px;">Draft Orders</div>
<div class="t" style="left:619.25px;top:718.00px;font-size:11.2px;line-height:14px;color:#616161;letter-spacing:-0.240px;">CHF 61.30</div>
<div class="b" style="left:677.5px;top:724px;width:10px;height:2px;background:#adadad;border-radius:1px;"></div>
<div class="t" style="left:805.00px;top:601.00px;font-size:11.7px;line-height:15px;color:#2a2a2a;letter-spacing:0.422px;-webkit-text-stroke:0.52px #2a2a2a;">Average order value over time</div>
<div class="b" style="left:805px;top:615.9px;width:168.75px;height:0px;border-top:1px dotted #cccccc;"></div>
<div class="t" style="left:805.00px;top:626.00px;font-size:18px;line-height:22px;color:#303030;letter-spacing:-0.171px;-webkit-text-stroke:0.52px #303030;">CHF 67.33</div>
<div class="b" style="left:899.5px;top:636px;width:10px;height:2px;background:#adadad;border-radius:1px;"></div>
<div class="b" style="left:877.5px;top:665.25px;width:440px;height:1px;background:#f1f1f1;"></div>
<div class="t" style="left:806.50px;top:659.00px;font-size:10px;line-height:13px;color:#616161;letter-spacing:0.212px;">CHF 200</div>
<div class="b" style="left:877.5px;top:736.25px;width:440px;height:1px;background:#f1f1f1;"></div>
<div class="t" style="left:806.50px;top:730.00px;font-size:10px;line-height:13px;color:#616161;letter-spacing:0.122px;">CHF 0</div>
<svg class="b" style="left:0;top:0" width="1919" height="946">
<path d="M877.50 736.75C898.75 736.75 892.88 736.75 914.13 736.75C935.38 736.75 929.51 736.75 950.76 736.75C972.01 736.75 966.14 715.31 987.39 715.31C1008.64 715.31 1002.77 713.67 1024.02 713.67C1045.27 713.67 1039.40 711.90 1060.65 711.90C1081.90 711.90 1076.03 736.75 1097.28 736.75C1118.53 736.75 1112.66 736.75 1133.91 736.75C1155.16 736.75 1149.29 681.73 1170.54 681.73C1191.79 681.73 1185.92 736.75 1207.17 736.75C1228.42 736.75 1222.55 736.75 1243.80 736.75C1265.05 736.75 1259.18 736.75 1280.43 736.75C1301.68 736.75 1295.81 736.75 1317.06 736.75L1317.06 736.750L877.50 736.750Z" fill="url(#ag)"/>
<path d="M877.50 736.75C898.75 736.75 892.88 736.75 914.13 736.75C935.38 736.75 929.51 736.75 950.76 736.75C972.01 736.75 966.14 715.31 987.39 715.31C1008.64 715.31 1002.77 713.67 1024.02 713.67C1045.27 713.67 1039.40 711.90 1060.65 711.90C1081.90 711.90 1076.03 736.75 1097.28 736.75C1118.53 736.75 1112.66 736.75 1133.91 736.75C1155.16 736.75 1149.29 681.73 1170.54 681.73C1191.79 681.73 1185.92 736.75 1207.17 736.75C1228.42 736.75 1222.55 736.75 1243.80 736.75C1265.05 736.75 1259.18 736.75 1280.43 736.75C1301.68 736.75 1295.81 736.75 1317.06 736.75" fill="none" stroke="#3c98ca" stroke-width="1.800" stroke-linecap="butt" stroke-linejoin="round"/></svg>
<div class="t" style="left:854.25px;top:749.00px;font-size:10px;line-height:13px;color:#616161;letter-spacing:0.260px;">May 2024</div>
<div class="t" style="left:930.50px;top:749.00px;font-size:10px;line-height:13px;color:#616161;letter-spacing:0.274px;">Jul 2024</div>
<div class="t" style="left:999.50px;top:749.00px;font-size:10px;line-height:13px;color:#616161;letter-spacing:0.267px;">Sept 2024</div>
<div class="t" style="left:1074.50px;top:749.00px;font-size:10px;line-height:13px;color:#616161;letter-spacing:0.274px;">Nov 2024</div>
<div class="t" style="left:1148.78px;top:749.00px;font-size:10px;line-height:13px;color:#616161;letter-spacing:0.263px;">Jan 2025</div>
<div class="t" style="left:1221.47px;top:749.00px;font-size:10px;line-height:13px;color:#616161;letter-spacing:0.250px;">Mar 2025</div>
<div class="b" style="left:912px;top:789px;width:11px;height:2px;background:#3c98ca;border-radius:1px;"></div>
<div class="t" style="left:928.75px;top:784.00px;font-size:10px;line-height:13px;color:#616161;letter-spacing:0.056px;">12 May 2024–11 May 2025</div>
<svg class="b" style="left:1066.3px;top:787.5px;" width="12" height="5" viewBox="0 0 12 5"><circle cx="1.500" cy="2.500" r="1" fill="#c4e2f2"/><circle cx="5.500" cy="2.500" r="1" fill="#c4e2f2"/><circle cx="9.500" cy="2.500" r="1" fill="#c4e2f2"/></svg>
<div class="t" style="left:1083.75px;top:784.00px;font-size:10px;line-height:13px;color:#616161;letter-spacing:0.056px;">13 May 2023–11 May 2024</div>
<div class="t" style="left:1365.00px;top:601.00px;font-size:11.7px;line-height:15px;color:#2a2a2a;letter-spacing:0.481px;-webkit-text-stroke:0.52px #2a2a2a;">Total sales by product</div>
<div class="b" style="left:1365px;top:615.9px;width:123.75px;height:0px;border-top:1px dotted #cccccc;"></div>
<div class="t" style="left:1364.50px;top:628.00px;font-size:10px;line-height:13px;color:#616161;letter-spacing:0.149px;">ProDrive™ 2024 Waterproof Golf Shoes · ShipDirect Golf · Golf Shoes</div>
<div class="b" style="left:1364.5px;top:643.7px;width:369.25px;height:29.5px;background:#35a7e8;border-radius:0 2.500px 2.500px 0;"></div>
<div class="t" style="left:1743.25px;top:653.00px;font-size:10px;line-height:13px;color:#616161;letter-spacing:0.158px;">CHF 308.37</div>
<div class="b" style="left:1815.5px;top:658px;width:10.5px;height:2px;background:#adadad;border-radius:1px;"></div>
<div class="b" style="left:1364.5px;top:675px;width:1.5px;height:30px;background:#b9def6;"></div>
<div class="t" style="left:1374.50px;top:684.00px;font-size:10px;line-height:13px;color:#616161;letter-spacing:0.151px;">CHF 0.00</div>
<div class="b" style="left:230px;top:828px;width:546px;height:140px;background:#fff;border-radius:10.5px;box-shadow:0 0 0 0.5px rgba(0,0,0,.065),0 1px 0 0 rgba(0,0,0,.085);"></div>
<div class="b" style="left:790px;top:828px;width:546px;height:140px;background:#fff;border-radius:10.5px;box-shadow:0 0 0 0.5px rgba(0,0,0,.065),0 1px 0 0 rgba(0,0,0,.085);"></div>
<div class="b" style="left:1350px;top:828px;width:546px;height:140px;background:#fff;border-radius:10.5px;box-shadow:0 0 0 0.5px rgba(0,0,0,.065),0 1px 0 0 rgba(0,0,0,.085);"></div>
<div class="t" style="left:245.00px;top:844.00px;font-size:11.7px;line-height:15px;color:#2a2a2a;letter-spacing:0.439px;-webkit-text-stroke:0.52px #2a2a2a;">Sessions over time</div>
<div class="b" style="left:245px;top:858.65px;width:106.75px;height:0px;border-top:1px dotted #cccccc;"></div>
<div class="t" style="left:245.00px;top:869.00px;font-size:18px;line-height:22px;color:#303030;letter-spacing:0.116px;-webkit-text-stroke:0.52px #303030;">14,686</div>
<svg class="b" style="left:308.2px;top:877.2px;" width="4.9" height="4.9" viewBox="0 0 6 6"><path d="M0.900 5.100L4.900 1.100M1.600 0.900H5.100V4.400" fill="none" stroke="#12855a" stroke-width="1.450" stroke-linecap="square" stroke-linejoin="miter"/></svg>
<div class="t" style="left:317.00px;top:873.00px;font-size:9.6px;line-height:13px;color:#12855a;font-weight:700;letter-spacing:0.362px;">198%</div>
<div class="t" style="left:246.75px;top:902.00px;font-size:10px;line-height:13px;color:#616161;letter-spacing:0.165px;">3T</div>
<div class="b" style="left:278.75px;top:908.3px;width:478.25px;height:1px;background:#f1f1f1;"></div>
<svg class="b" style="left:0;top:0" width="1919" height="946"><path d="M378 952C391 952 391 941.900 402.500 941.900C414 941.900 414 952 427 952" fill="none" stroke="#3c98ca" stroke-width="1.800"/></svg>
<div class="t" style="left:805.00px;top:844.00px;font-size:11.7px;line-height:15px;color:#2a2a2a;letter-spacing:0.450px;-webkit-text-stroke:0.52px #2a2a2a;">Conversion rate over time</div>
<div class="b" style="left:805px;top:858.65px;width:145.2px;height:0px;border-top:1px dotted #cccccc;"></div>
<div class="t" style="left:805.00px;top:869.00px;font-size:18px;line-height:22px;color:#303030;letter-spacing:-0.857px;-webkit-text-stroke:0.52px #303030;">0.1%</div>
<div class="b" style="left:851.5px;top:878px;width:10.5px;height:2px;background:#adadad;border-radius:1px;"></div>
<div class="t" style="left:806.60px;top:902.00px;font-size:10px;line-height:13px;color:#616161;letter-spacing:0.377px;">0.4%</div>
<div class="b" style="left:850.4px;top:908.3px;width:466.6px;height:1px;background:#f1f1f1;"></div>
<div class="t" style="left:806.60px;top:941.00px;font-size:10px;line-height:13px;color:#616161;letter-spacing:0.377px;">0.2%</div>
<div class="t" style="left:1365.00px;top:844.00px;font-size:11.7px;line-height:15px;color:#2a2a2a;letter-spacing:0.477px;-webkit-text-stroke:0.52px #2a2a2a;">Conversion rate breakdown</div>
<div class="b" style="left:1365px;top:858.65px;width:155px;height:0px;border-top:1px dotted #cccccc;"></div>
<div class="t" style="left:1365.00px;top:869.00px;font-size:18px;line-height:22px;color:#303030;letter-spacing:-0.882px;-webkit-text-stroke:0.52px #303030;">0.1%</div>
<div class="b" style="left:1411.0px;top:878px;width:10px;height:2px;background:#adadad;border-radius:1px;"></div>
<div class="b" style="left:1499.75px;top:904px;width:1px;height:50px;background:#e3e3e3;"></div>
<div class="b" style="left:1636.5px;top:904px;width:1px;height:50px;background:#e3e3e3;"></div>
<div class="b" style="left:1773.75px;top:904px;width:1px;height:50px;background:#e3e3e3;"></div>
<div class="b" style="left:1365.5px;top:911.5px;width:12px;height:13px;background:#f3f3f3;border-radius:6px;"></div>
<svg class="b" style="left:1367px;top:912.3px;" width="9" height="12" viewBox="0 0 9 12"><path d="M1.200 4.500h6.300M1.500 7.400h6.300M5.700 0.900L3.500 11.100" fill="none" stroke="#303030" stroke-width="1.350" stroke-linecap="round"/></svg>
<div class="t" style="left:1383.00px;top:909.00px;font-size:11.7px;line-height:15px;color:#303030;letter-spacing:-0.309px;">Sessions</div>
<div class="t" style="left:1365.00px;top:928.00px;font-size:12.2px;line-height:16px;color:#303030;font-weight:700;letter-spacing:0.637px;">100%</div>
<div class="t" style="left:1404.25px;top:928.00px;font-size:11.7px;line-height:15px;color:#616161;letter-spacing:-0.006px;">14,686</div>
<div class="t" style="left:1511.25px;top:909.00px;font-size:11.7px;line-height:15px;color:#303030;letter-spacing:-0.065px;">Added to cart</div>
<div class="t" style="left:1511.25px;top:928.00px;font-size:12.2px;line-height:16px;color:#303030;font-weight:700;letter-spacing:0.331px;">1.25%</div>
<div class="t" style="left:1553.75px;top:928.00px;font-size:11.7px;line-height:15px;color:#616161;letter-spacing:-0.424px;">183</div>
<div class="t" style="left:1648.00px;top:909.00px;font-size:11.7px;line-height:15px;color:#303030;letter-spacing:-0.182px;">Reached checkout</div>
<div class="t" style="left:1648.00px;top:928.00px;font-size:12.2px;line-height:16px;color:#303030;font-weight:700;letter-spacing:0.981px;">0.99%</div>
<div class="t" style="left:1693.75px;top:928.00px;font-size:11.7px;line-height:15px;color:#616161;letter-spacing:-0.424px;">145</div>
<div class="t" style="left:1785.00px;top:909.00px;font-size:11.7px;line-height:15px;color:#303030;letter-spacing:-0.134px;">Completed che...</div>
<div class="t" style="left:1785.00px;top:928.00px;font-size:12.2px;line-height:16px;color:#303030;font-weight:700;letter-spacing:0.148px;">0.1%</div>
<div class="t" style="left:1820.00px;top:928.00px;font-size:11.7px;line-height:15px;color:#616161;letter-spacing:-1.007px;">15</div>
<div class="b" style="left:1908px;top:50px;width:11px;height:896px;background:#f1f1f1;border-radius:0 9px 0 0;"></div>
<div class="b" style="left:1912.3px;top:62px;width:5.5px;height:281.7px;background:#b6b6b6;border-radius:3px;"></div>
<svg class="b" style="left:1911.5px;top:52.5px;" width="7" height="6" viewBox="0 0 7 6"><path d="M3.500 1L6.200 4.500H0.800Z" fill="#b4b4b4"/></svg>
<svg class="b" style="left:1911.5px;top:936.5px;" width="7" height="6" viewBox="0 0 7 6"><path d="M3.500 5.400L6.400 1.400H0.600Z" fill="#9c9c9c"/></svg>
<div class="b" style="left:0px;top:944.6px;width:1919px;height:1.4px;background:#acacaf;"></div>
</div></body></html>
